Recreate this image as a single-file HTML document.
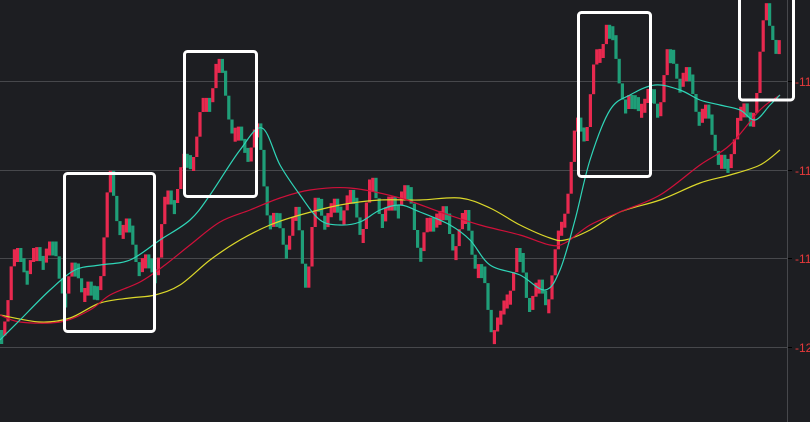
<!DOCTYPE html>
<html><head><meta charset="utf-8"><style>
html,body{margin:0;padding:0;background:#1d1e22;width:810px;height:422px;overflow:hidden}
svg{display:block}
text{font-family:"Liberation Sans",sans-serif;font-size:12px;fill:#e8393a}
</style></head><body>
<svg id="s" width="810" height="422" viewBox="0 0 810 422">
<rect width="810" height="422" fill="#1d1e22"/>
<g stroke="#47484c" stroke-width="1">
<line x1="0" y1="81.5" x2="787" y2="81.5"/>
<line x1="0" y1="170.5" x2="787" y2="170.5"/>
<line x1="0" y1="258.5" x2="787" y2="258.5"/>
<line x1="0" y1="347.5" x2="787" y2="347.5"/>
<line x1="787.5" y1="0" x2="787.5" y2="422"/>
</g>
<g stroke="#000" stroke-width="1">
<line x1="788" y1="81.5" x2="792" y2="81.5"/><line x1="788" y1="170.5" x2="792" y2="170.5"/>
<line x1="788" y1="258.5" x2="792" y2="258.5"/><line x1="788" y1="347.5" x2="792" y2="347.5"/>
</g>
<text x="795" y="86">-11</text><text x="795" y="175">-11</text>
<text x="795" y="263">-11</text><text x="795" y="352">-12</text>
<g id="c"></g>
<g id="m" fill="none" stroke-width="1.2"></g>
<g fill="none" stroke="#fff" stroke-width="3">
<rect x="64.5" y="173.5" width="90" height="158" rx="3"/>
<rect x="184.5" y="51.5" width="72" height="145" rx="3"/>
<rect x="578.5" y="12.5" width="72" height="164" rx="3"/>
<rect x="739.5" y="-5" width="54" height="105" rx="3"/>
</g>
</svg>
<script>
var k=[[0,330],[10,265],[20,255],[30,265],[45,240],[55,265],[65,290],[75,265],[90,300],[100,260],[108,180],[118,220],[130,240],[145,270],[155,260],[165,200],[175,185],[190,150],[205,100],[215,60],[225,100],[240,150],[255,130],[265,200],[280,240],[295,220],[305,280],[315,200],[330,215],[345,195],[360,225],[370,185],[385,215],[400,185],[410,210],[420,250],[435,200],[450,240],[465,220],[480,280],[490,320],[500,325],[505,290],[515,255],[525,290],[545,295],[555,255],[565,190],[575,130],[585,120],[595,60],[605,15],[615,70],[630,110],[640,90],[655,110],[665,60],[680,70],[690,90],[700,110],[715,140],[725,180],[735,110],[745,120],[755,90],[765,5],[775,40],[782,70]];
function at(x){for(var i=1;i<k.length;i++){if(x<=k[i][0]){var a=k[i-1],b=k[i];return a[1]+(b[1]-a[1])*(x-a[0])/(b[0]-a[0]);}}return k[k.length-1][1];}
var ns="http://www.w3.org/2000/svg",c=document.getElementById('c');
var prev=at(0);
for(var x=0;x<=780;x+=3.2){var y=at(x)+Math.sin(x*2.3)*14;var t=Math.min(prev,y),h=Math.max(Math.abs(y-prev),14);
var r=document.createElementNS(ns,'rect');r.setAttribute('x',x.toFixed(1));r.setAttribute('y',t.toFixed(1));r.setAttribute('width','3.2');r.setAttribute('height',h.toFixed(1));
r.setAttribute('fill',y<prev?'#e8294f':'#1f9e78');c.appendChild(r);prev=y;}
function line(p,col){var d='M'+p[0][0]+' '+p[0][1];for(var i=0;i<p.length-1;i++){var p0=p[Math.max(0,i-1)],p1=p[i],p2=p[i+1],p3=p[Math.min(p.length-1,i+2)];
d+='C'+(p1[0]+(p2[0]-p0[0])/6).toFixed(1)+' '+(p1[1]+(p2[1]-p0[1])/6).toFixed(1)+' '+(p2[0]-(p3[0]-p1[0])/6).toFixed(1)+' '+(p2[1]-(p3[1]-p1[1])/6).toFixed(1)+' '+p2[0]+' '+p2[1];}
var e=document.createElementNS(ns,'path');e.setAttribute('d',d);e.setAttribute('stroke',col);document.getElementById('m').appendChild(e);}
line([[0,315],[40,322],[70,318],[100,303],[130,298],[155,295],[180,285],[210,260],[240,240],[270,225],[300,215],[340,205],[380,200],[420,200],[460,198],[490,208],[520,225],[550,238],[565,240],[590,230],[620,212],[660,200],[700,183],[730,175],[760,165],[780,150]],'#dcd82a');
line([[0,315],[20,322],[60,322],[90,310],[110,295],[140,282],[165,265],[190,245],[220,222],[250,210],[280,198],[310,190],[350,188],[400,198],[440,212],[480,225],[520,235],[550,245],[565,243],[590,225],[620,212],[660,195],[700,165],[730,145],[760,110],[780,95]],'#d0103a');
line([[0,340],[20,320],[50,290],[75,270],[100,265],[130,260],[160,240],[190,220],[210,195],[240,150],[262,128],[280,165],[300,195],[320,220],[340,225],[360,222],[380,210],[400,205],[420,212],[450,225],[470,240],[490,265],[520,275],[545,290],[560,270],[575,220],[590,160],[610,110],[630,95],[655,85],[680,90],[700,100],[720,105],[740,110],[755,120],[770,105],[780,95]],'#2fd6b8');
</script>
</body></html>
